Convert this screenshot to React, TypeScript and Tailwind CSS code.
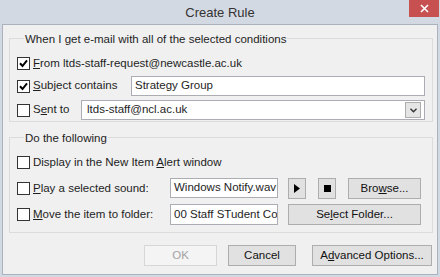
const font = { fontFamily: '"Segoe UI", "Liberation Sans", Arial, sans-serif' };

const CheckBox = ({ checked }: { checked?: boolean }) => (
  <div className="w-[13px] h-[13px] shrink-0 border border-[#333333] bg-white flex items-center justify-center">
    {checked && (
      <svg width="9" height="9" viewBox="0 0 9 9">
        <path d="M1 4.3 L3.5 7 L8 1.3" fill="none" stroke="#000" strokeWidth="2" />
      </svg>
    )}
  </div>
);

const Btn = ({ children, className = "", disabled }: { children: React.ReactNode; className?: string; disabled?: boolean }) => (
  <div
    className={
      "h-[21px] shrink-0 flex items-center justify-center border text-[11.5px] " +
      (disabled ? "border-[#d6d6d6] bg-[#f4f4f4] text-[#a3a3a3] " : "border-[#adadad] bg-[#e1e1e1] text-[#111] ") +
      className
    }
  >
    {children}
  </div>
);

const Field = ({ value, className = "" }: { value: string; className?: string }) => (
  <div className={"h-[20px] border border-[#abadb3] bg-white pl-[3px] flex items-center overflow-hidden whitespace-nowrap text-[11.5px] " + className}>
    {value}
  </div>
);

const GroupTitle = ({ text }: { text: string }) => (
  <div className="-mt-[8px] ml-[7px] h-[16px] leading-[16px] w-fit px-[1px] bg-[#f0f0f0] text-[11.5px] text-[#1e1e1e]">{text}</div>
);

export default function App() {
  return (
    <div style={font} className="w-[440px] h-[277px] bg-[#d3d9e2] flex flex-col px-[2px] pb-[2px] text-[#1e1e1e]">
      <div className="h-[24px] relative flex items-center justify-center shrink-0">
        <span className="text-[13px] text-[#333] mt-[1px]">Create Rule</span>
        <div className="absolute right-[-1px] top-0 w-[30px] h-[17px] bg-[#c75050] flex items-center justify-center">
          <svg width="9" height="9" viewBox="0 0 9 9">
            <path d="M1 1 L8 8 M8 1 L1 8" stroke="#fff" strokeWidth="1.6" />
          </svg>
        </div>
      </div>
      <div className="flex-1 border border-[#aab2bd] bg-[#f0f0f0] pl-[6px] pr-[4px] pt-[13px]">
        <div className="border border-[#dcdcdc] pl-[7px] pr-[7px] pb-[1px]">
          <GroupTitle text="When I get e-mail with all of the selected conditions" />
          <div className="mt-[7px] h-[19px] flex items-center gap-[3px] text-[11.5px]">
            <CheckBox checked />
            <span><u>F</u>rom ltds-staff-request@newcastle.ac.uk</span>
          </div>
          <div className="mt-[3px] h-[20px] flex items-center text-[11.5px]">
            <CheckBox checked />
            <span className="ml-[3px] w-[98px]"><u>S</u>ubject contains</span>
            <Field value="Strategy Group" className="flex-1" />
          </div>
          <div className="mt-[4px] h-[20px] flex items-center text-[11.5px]">
            <CheckBox />
            <span className="ml-[3px] w-[48px]">S<u>e</u>nt to</span>
            <div className="flex-1 h-[20px] border border-[#abadb3] bg-white pl-[5px] pr-[3px] flex items-center justify-between">
              <span>ltds-staff@ncl.ac.uk</span>
              <div className="w-[16px] h-[16px] border border-[#adadad] bg-[#e5e5e5] flex items-center justify-center">
                <svg width="7" height="5" viewBox="0 0 7 5">
                  <path d="M0.5 0.8 L3.5 3.8 L6.5 0.8" fill="none" stroke="#333" strokeWidth="1.4" />
                </svg>
              </div>
            </div>
          </div>
        </div>

        <div className="mt-[15px] border border-[#dcdcdc] pl-[7px] pr-[7px] pb-[7px]">
          <GroupTitle text="Do the following" />
          <div className="mt-[7px] h-[19px] flex items-center gap-[3px] text-[11.5px]">
            <CheckBox />
            <span>Display in the New Item <u>A</u>lert window</span>
          </div>
          <div className="mt-[6px] h-[21px] flex items-center text-[11.5px]">
            <CheckBox />
            <span className="ml-[3px] w-[137px]"><u>P</u>lay a selected sound:</span>
            <Field value="Windows Notify.wav" className="w-[108px] h-[19px] self-start" />
            <Btn className="ml-[10px] w-[18px]">
              <svg width="6" height="9" viewBox="0 0 6 9"><path d="M0 0 L6 4.5 L0 9 Z" fill="#000" /></svg>
            </Btn>
            <Btn className="ml-[12px] w-[18px]">
              <div className="w-[7px] h-[7px] bg-black" />
            </Btn>
            <Btn className="ml-[12px] w-[73px]">Bro<u>w</u>se...</Btn>
          </div>
          <div className="mt-[5px] h-[21px] flex items-center text-[11.5px]">
            <CheckBox />
            <span className="ml-[3px] w-[137px]"><u>M</u>ove the item to folder:</span>
            <Field value="00 Staff STudent Co" className="w-[108px] h-[21px]" />
            <Btn className="ml-[10px] w-[133px]">Se<u>l</u>ect Folder...</Btn>
          </div>
        </div>

        <div className="mt-[12px] flex justify-end pr-[1px]">
          <Btn disabled className="w-[73px]">OK</Btn>
          <Btn className="ml-[11px] w-[68px]">Cancel</Btn>
          <Btn className="ml-[16px] w-[120px]">A<u>d</u>vanced Options...</Btn>
        </div>
      </div>
    </div>
  );
}
